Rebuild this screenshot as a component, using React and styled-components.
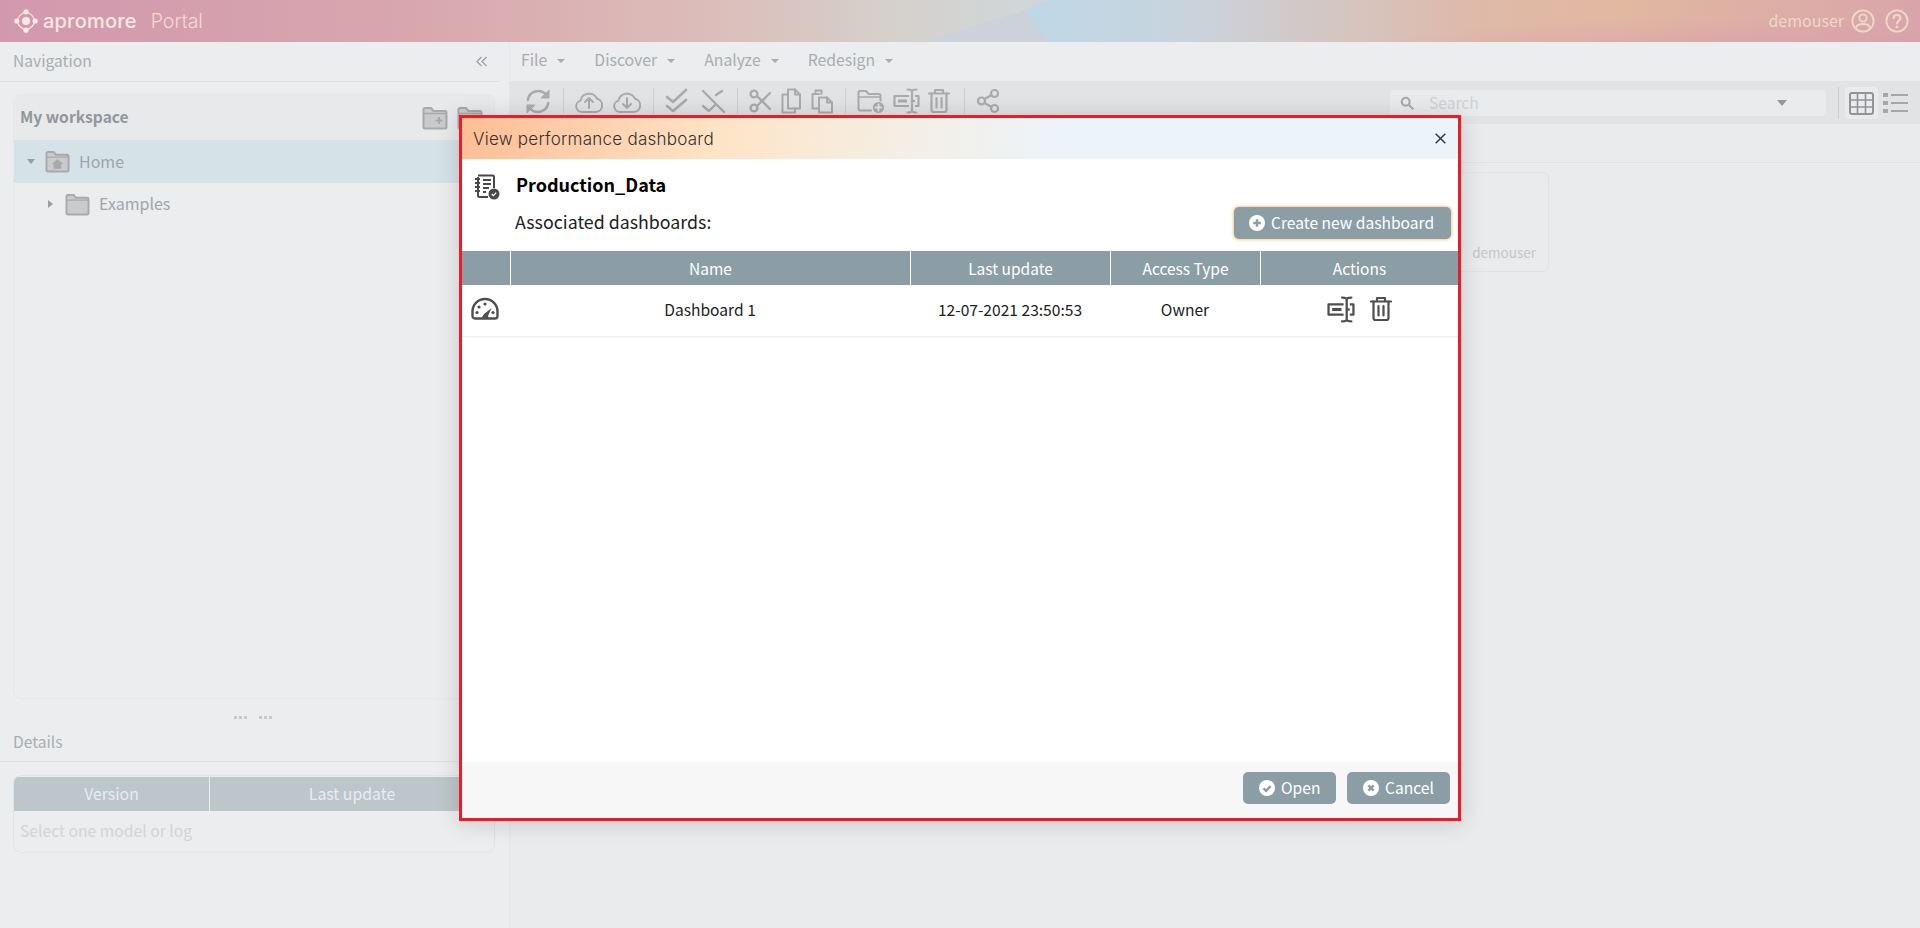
import React from 'react';
import styled, { createGlobalStyle } from 'styled-components';

const sans = `"Noto Sans CJK SC", "Source Sans Pro", "Noto Sans", sans-serif`;
const geo = `"Inter", "Lato", sans-serif`;

const Global = createGlobalStyle`
  html, body { margin: 0; padding: 0; height: 100%; }
  body { font-family: ${sans}; background: #ebedef; overflow: hidden; }
  * { box-sizing: border-box; }
`;

const Page = styled.div`
  position: relative;
  width: 100%;
  height: 100vh;
  display: flex;
  flex-direction: column;
  overflow: hidden;
`;
const Header = styled.header`
  position: relative;
  height: 42px;
  flex: none;
  display: flex;
  align-items: center;
  justify-content: space-between;
  padding: 0 11px 0 14px;
  color: #f3e2d6;
  background:
    radial-gradient(ellipse 420px 34px at 1780px 50px, rgba(217, 158, 172, .75), transparent),
    linear-gradient(90deg, #d298ae 0, #d8a6ae 400px, #dcbcb8 700px, #d5d1cd 900px, #d1d6d8 1020px, #c6d6e0 1100px, #cdd0d6 1220px, #d2c8c6 1310px, #dfb9a8 1480px, #e1b8a0 1620px, #d9a5ab 1920px);
  &::before {
    content: '';
    position: absolute;
    inset: 0;
    background: #cbd2da;
    clip-path: polygon(923px 42px, 1025px 10px, 1049px 42px);
  }
  &::after {
    content: '';
    position: absolute;
    inset: 0;
    background: linear-gradient(90deg, #bed8e7 1025px, #c4d6e2 1110px, rgba(205, 208, 214, 0) 1230px);
    clip-path: polygon(1049px 0, 1260px 0, 1260px 42px, 1049px 42px, 1025px 10px);
  }
  & > * { position: relative; z-index: 1; }
`;
const Brand = styled.div`
  display: flex;
  align-items: center;
  gap: 5px;
`;
const BrandName = styled.span`
  font-family: ${geo};
  font-weight: 500;
  font-size: 20px;
  letter-spacing: .2px;
  color: #f6e8e4;
`;
const BrandPortal = styled.span`
  font-family: ${geo};
  font-weight: 300;
  font-size: 19.5px;
  margin-left: 9px;
  color: #f0dccb;
`;
const UserBox = styled.div`
  display: flex;
  align-items: center;
  font-size: 16px;
  color: #ecd9c9;
  & > svg:first-of-type { margin: 0 10px 0 7px; }
`;
const UserName = styled.span`
  padding-bottom: 2px;
`;
const Body = styled.div`
  flex: 1;
  display: flex;
  min-height: 0;
`;
const West = styled.aside`
  width: 510px;
  flex: none;
  display: flex;
  flex-direction: column;
  border-right: 1px solid #e4e6e8;
`;
const PanelHead = styled.div`
  height: ${p => p.$h}px;
  flex: none;
  display: flex;
  align-items: center;
  justify-content: space-between;
  padding: 0 13px 0 13px;
  margin-right: 9px;
  border-bottom: 1px solid #dfe1e3;
  color: #a9adb0;
  font-size: 15.6px;
`;
const PanelLabel = styled.span`
  padding-bottom: ${p => p.$lift}px;
`;
const Workspace = styled.section`
  margin: 12px 14px 0 13px;
  height: 605px;
  border: 1px solid #e5e7e9;
  border-radius: 8px;
  display: flex;
  flex-direction: column;
  overflow: hidden;
`;
const WorkspaceHead = styled.div`
  height: 45px;
  flex: none;
  display: flex;
  align-items: center;
  justify-content: space-between;
  padding: 0 0 0 6px;
  background: #e8e9eb;
  font-size: 15.6px;
  font-weight: 700;
  color: #92979b;
`;
const WorkspaceTitle = styled.span`
  padding-bottom: 3px;
`;
const HeadIcons = styled.div`
  display: flex;
  gap: 7px;
  margin-right: 10px;
`;
const TreeRow = styled.div`
  height: ${p => p.$h}px;
  flex: none;
  display: flex;
  align-items: center;
  padding-left: ${p => p.$indent}px;
  gap: 9px;
  background: ${p => (p.$selected ? '#d5e2e8' : 'transparent')};
  font-size: 16px;
  color: #a0a5a9;
`;
const TreeLabel = styled.span`
  padding-bottom: 2px;
`;
const Caret = styled.span`
  width: 0;
  height: 0;
  flex: none;
  margin-right: ${p => p.$gap}px;
  border-style: solid;
  ${p => p.$open
    ? 'border-width: 5px 4px 0 4px; border-color: #9a9ea2 transparent transparent transparent;'
    : 'border-width: 4px 0 4px 5px; border-color: transparent transparent transparent #9a9ea2;'}
`;
const Splitter = styled.div`
  height: 28px;
  flex: none;
  display: flex;
  align-items: center;
  justify-content: center;
  gap: 12px;
  padding: 8px 4px 0 0;
`;
const Dots = styled.span`
  width: 13px;
  height: 3px;
  background: radial-gradient(circle at 1.5px 1.5px, #c6c9cb 1.4px, transparent 1.6px) 0 0 / 5px 3px;
`;
const DetailsTable = styled.div`
  margin: 13px 14px 0 13px;
  height: 78px;
  border: 1px solid #e0e2e4;
  border-radius: 8px;
  overflow: hidden;
`;
const DetailsHead = styled.div`
  height: 34px;
  margin-top: 1px;
  display: grid;
  grid-template-columns: 195px 1fr;
  background: #bdc6cb;
  color: #e9edef;
  font-size: 15.8px;
`;
const DetailsCell = styled.div`
  display: flex;
  align-items: center;
  justify-content: center;
  padding-bottom: 1px;
  & + & { border-left: 1px solid #eceef0; }
`;
const DetailsEmpty = styled.div`
  padding: 8px 6px;
  font-size: 15.7px;
  color: #d2d5d7;
`;
const Center = styled.main`
  flex: 1;
  min-width: 0;
  display: flex;
  flex-direction: column;
  background: #e9ebed;
`;
const MenuBar = styled.nav`
  height: 40px;
  flex: none;
  display: flex;
  align-items: center;
  padding: 0 0 4px 11px;
  gap: 29px;
  background: #ebedef;
  border-bottom: 1px solid #e0e2e4;
`;
const MenuItem = styled.span`
  display: flex;
  align-items: center;
  gap: 10px;
  font-size: 15.8px;
  color: #a9adb0;
  &::after {
    content: '';
    margin-top: 3px;
    border-style: solid;
    border-width: 4px 4px 0 4px;
    border-color: #a9adb0 transparent transparent transparent;
  }
`;
const Toolbar = styled.div`
  height: 42px;
  flex: none;
  display: flex;
  align-items: center;
  padding-left: 16px;
  background: #e1e3e5;
`;
const ToolStrip = styled.div`
  display: flex;
  align-items: center;
  padding-bottom: 4px;
`;
const ToolGroup = styled.div`
  display: flex;
  align-items: center;
  gap: ${p => p.$gap || 10}px;
  padding-right: ${p => p.$pr || 12}px;
  margin-right: ${p => p.$mr || 11}px;
  height: 26px;
  border-right: 1px solid #cdd0d2;
  &:last-child { border-right: 0; }
`;
const Search = styled.div`
  margin-left: auto;
  width: 436px;
  height: 26px;
  display: flex;
  align-items: center;
  padding: 0 0 0 10px;
  background: #e9ebed;
  border-radius: 4px;
  font-size: 15.6px;
  color: #cfd2d4;
`;
const SearchLabel = styled.span`
  margin-left: 15px;
  flex: 1;
  padding-bottom: 3px;
`;
const SearchCaret = styled.span`
  margin-right: 39px;
  border-style: solid;
  border-width: 6px 5.500px 0 5.500px;
  border-color: #95999c transparent transparent transparent;
`;
const ViewSwitch = styled.div`
  display: flex;
  align-items: center;
  gap: 1px;
  margin: 0 8px 0 12px;
  padding-left: 6px;
  border-left: 1px solid #cdd0d2;
`;
const ViewButton = styled.span`
  width: 33px;
  height: 32px;
  display: flex;
  align-items: center;
  justify-content: center;
  border-radius: 3px;
  background: ${p => (p.$active ? '#e9ebed' : 'transparent')};
`;
const Crumbs = styled.div`
  height: 39px;
  flex: none;
  border-bottom: 1px solid #e0e2e4;
`;
const CardArea = styled.div`
  flex: 1;
  display: flex;
  justify-content: flex-end;
  align-items: flex-start;
  padding: 9px 371px 0 0;
`;
const Card = styled.div`
  width: 200px;
  height: 100px;
  border: 1px solid #e0e2e4;
  border-radius: 6px;
  display: flex;
  align-items: flex-end;
  justify-content: flex-end;
  padding: 0 12px 9px 0;
  font-size: 13.500px;
  color: #c4c7c9;
`;

const Modal = styled.div`
  position: absolute;
  left: 459px;
  top: 115px;
  width: 1002px;
  height: 706px;
  display: flex;
  flex-direction: column;
  background: #fff;
  border: 3px solid #ed1c24;
  box-shadow: 0 2px 22px rgba(0, 0, 0, .16);
`;
const ModalTitle = styled.div`
  height: 41px;
  flex: none;
  display: flex;
  align-items: center;
  justify-content: space-between;
  padding: 0 12px 0 11px;
  background: linear-gradient(100deg, #ffbd94 0%, #fee4c6 26%, #f4efe6 45%, #ebf4fb 62%, #ebf4fb 100%);
  font-family: ${geo};
  font-weight: 300;
  font-size: 17px;
  letter-spacing: .25px;
  color: #333;
`;
const Close = styled.span`
  display: flex;
  color: #2f3b45;
`;
const Intro = styled.div`
  height: 92px;
  flex: none;
  display: grid;
  grid-template-columns: 41px 1fr auto;
  grid-template-rows: 48px 40px;
  padding: 0 7px 0 12px;
`;
const FileIcon = styled.div`
  padding-top: 15px;
`;
const FileName = styled.div`
  grid-column: 2 / 4;
  display: flex;
  align-items: center;
  padding: 2px 0 0 1px;
  font-size: 18px;
  font-weight: 700;
  color: #000;
`;
const AssocLabel = styled.div`
  display: flex;
  align-items: center;
  font-size: 17.800px;
  color: #222;
  padding-bottom: 13px;
`;
const ActionButton = styled.button`
  height: 32px;
  display: inline-flex;
  align-items: center;
  gap: 6px;
  padding: 0 0 2px ${p => p.$pl}px;
  width: ${p => p.$w}px;
  border: 0;
  border-radius: 5px;
  background: #8b9ea6;
  color: #fff;
  font-family: ${sans};
  font-size: 15.600px;
  box-shadow: ${p => (p.$focus ? '0 0 3px 1px #f9c98a' : 'none')};
  & > svg { margin-top: 2px; }
`;
const Grid = styled.div`
  display: grid;
  grid-template-columns: 48px 400px 200px 150px 198px;
`;
const HeadRow = styled(Grid)`
  height: 34px;
  background: #8b9ea6;
  color: #fff;
  font-size: 15.500px;
`;
const HeadCell = styled.div`
  display: flex;
  align-items: center;
  justify-content: center;
  & + & { border-left: 1px solid #fff; }
`;
const DataRow = styled(Grid)`
  height: 52px;
  border-bottom: 1px solid #eeeeee;
  font-size: 15.600px;
  color: #222;
`;
const DataCell = styled.div`
  display: flex;
  align-items: center;
  justify-content: center;
  gap: ${p => p.$gap || 0}px;
  padding-bottom: 3px;
  padding-right: ${p => p.$pr || 0}px;
`;
const Filler = styled.div`
  flex: 1;
`;
const ModalFoot = styled.div`
  height: 56px;
  flex: none;
  display: flex;
  justify-content: flex-end;
  align-items: flex-start;
  gap: 11px;
  padding: 10px 8px 0 0;
  background: #f7f7f7;
`;

const S = ({ w = 26, h = 26, vb = '0 0 26 26', c = '#a9abad', sw = 2, children }) => (
  <svg width={w} height={h} viewBox={vb} fill="none" stroke={c} strokeWidth={sw} strokeLinecap="round" strokeLinejoin="round" style={{ flex: 'none', display: 'block' }}>
    {children}
  </svg>
);

const Logo = () => (
  <svg width="24" height="24" viewBox="0 0 24 24" fill="#f6e8e4" style={{ flex: 'none' }}>
    <circle cx="12" cy="12" r="4" />
    <circle cx="12" cy="2.800" r="2.600" /><circle cx="12" cy="21.200" r="2.600" />
    <circle cx="2.800" cy="12" r="2.600" /><circle cx="21.200" cy="12" r="2.600" />
    <path d="M12 3Q19 5 21 12Q19 19 12 21Q5 19 3 12Q5 5 12 3Z" fill="none" stroke="#f6e8e4" strokeWidth="1.100" />
  </svg>
);
const UserIcon = () => (
  <S w={24} h={24} vb="0 0 24 24" c="#ecd9c9" sw={1.800}>
    <circle cx="12" cy="12" r="10.600" /><circle cx="12" cy="9" r="3.600" />
    <path d="M5 18.500c1-2.600 3.400-3.500 7-3.500s6 .9 7 3.500" />
  </S>
);
const HelpIcon = () => (
  <S w={24} h={24} vb="0 0 24 24" c="#ecd9c9" sw={1.800}>
    <circle cx="12" cy="12" r="10.600" />
    <path d="M8.600 9.200c0-2 1.500-3.200 3.400-3.200s3.400 1.200 3.400 3c0 2.600-3.400 2.600-3.400 5.400" strokeWidth="2.200" />
    <circle cx="12" cy="18" r=".7" strokeWidth="1.600" />
  </S>
);
const Folder = ({ children, w = 25, h = 23, fill = '#c9cbcd', c = '#a7a9ab' }) => (
  <svg width={w} height={h} viewBox="0 0 26 24" style={{ flex: 'none', display: 'block' }}>
    <path d="M1.500 3.500a1.500 1.500 0 0 1 1.500-1.500h6l2.500 3H23a1.500 1.500 0 0 1 1.500 1.500V21a1.500 1.500 0 0 1-1.500 1.500H3A1.500 1.500 0 0 1 1.500 21Z" fill={fill} stroke={c} strokeWidth="2" strokeLinejoin="round" />
    <path d="M2 7.500h22" stroke={c} strokeWidth="1.400" />
    {children}
  </svg>
);
const Refresh = () => (
  <S w={24} h={25} vb="0 0 24 25" sw={2.500}>
    <path d="M1.800 11A10.500 10.500 0 0 1 20 5.500" />
    <path d="M22.200 14A10.500 10.500 0 0 1 4 19.500" />
    <path d="M23 1.500v7.500h-7.500Z" fill="#a9abad" strokeWidth="1" />
    <path d="M1 23.500V16h7.500Z" fill="#a9abad" strokeWidth="1" />
  </S>
);
const Cloud = ({ down }) => (
  <S w={28} h={26} vb="0 0 28 26">
    <path d="M7 24a5.800 5.800 0 0 1-1.500-11.400A8.800 8.800 0 0 1 22 10.800 6.700 6.700 0 0 1 21 24Z" />
    {down ? <path d="M14 10v10M10 16l4 4 4-4" /> : <path d="M14 20V10M10 14l4-4 4 4" />}
  </S>
);
const CheckAll = () => (
  <S w={23} h={26} vb="0 0 23 26" sw={2.600}><path d="M2 9l6 5L21 2" /><path d="M2 18l6 5 13-11" /></S>
);
const UncheckAll = () => (
  <S w={24} h={26} vb="0 0 24 26" sw={2.400}><path d="M2 3l21 21" /><path d="M15 7l6-4" /><path d="M2 18l6 5 6-6" /></S>
);
const Scissors = () => (
  <S w={22} h={26} vb="0 0 22 26" sw={2.400}><circle cx="5" cy="6" r="3.400" /><circle cx="5" cy="20" r="3.400" /><path d="M8 8l13 13M8 18L21 5" /></S>
);
const CopyIcon = () => (
  <S w={20} h={26} vb="0 0 20 26"><path d="M7 1.500h7l5 5v14H7Z" /><path d="M14 1.500v5h5" /><path d="M7 6.500H1.500V24.500H14v-4" /></S>
);
const Paste = () => (
  <S w={22} h={26} vb="0 0 22 26"><path d="M8 6H1.500v14.500H8" /><path d="M4.500 6V2.500h6V6" /><path d="M8 9.500h8l5 5v10H8Z" /><path d="M16 9.500v5h5" /></S>
);
const FolderAdd = ({ c = '#a9abad', fill = 'none' }) => (
  <S w={28} h={26} vb="0 0 28 26" c={c}>
    <path d="M14 22.500H3A1.500 1.500 0 0 1 1.500 21V4.500A1.500 1.500 0 0 1 3 3h6l2.500 3H22A1.500 1.500 0 0 1 23.500 7.500v5" fill={fill} />
    <path d="M2 9h21" strokeWidth="1.500" />
    <circle cx="21.500" cy="19.500" r="5.500" fill={c} stroke="none" />
    <path d="M21.500 16.500v6M18.500 19.500h6" stroke="#e1e3e5" strokeWidth="1.800" />
  </S>
);
const Rename = ({ c = '#a9abad', w = 27, h = 26 }) => (
  <S w={w} h={h} vb="0 0 27 26" c={c} sw={2.200}>
    <path d="M16 8H1.500v10H16M22 8h3.500v10H22" strokeLinecap="butt" />
    <rect x="5" y="11.500" width="9" height="3" fill={c} stroke="none" />
    <path d="M19 3.500v19M14.500 1.500c2.500 0 4.500 .5 4.500 2 0-1.500 2-2 4.500-2M14.500 24.500c2.500 0 4.500-.5 4.500-2 0 1.500 2 2 4.500 2" />
    <path d="M19 13h3" strokeLinecap="butt" />
  </S>
);
const Trash = ({ c = '#a9abad', w = 22, h = 26 }) => (
  <S w={w} h={h} vb="0 0 22 26" c={c} sw={2.200}>
    <path d="M1 5.500h20M7 5V2h8v3" />
    <path d="M3.500 5.500V22a2 2 0 0 0 2 2h11a2 2 0 0 0 2-2V5.500" />
    <path d="M8.500 10v9.500M13.500 10v9.500" />
  </S>
);
const Share = () => (
  <S w={22} h={26} vb="0 0 22 26" sw={2.200}><circle cx="17.500" cy="5.500" r="3.500" /><circle cx="4.500" cy="13" r="3.500" /><circle cx="17.500" cy="20.500" r="3.500" /><path d="M7.500 11l7-4M7.500 15l7 4" /></S>
);
const SearchIcon = () => (
  <S w={14} h={14} vb="0 0 16 16" c="#a8abae" sw={2.400}><circle cx="6.500" cy="6.500" r="4.500" /><path d="M10 10l4.500 4.500" /></S>
);
const GridIcon = () => (
  <S w={25} h={23} vb="0 0 25 23" c="#919497" sw={2}>
    <rect x="1" y="1" width="23" height="21" rx="2" /><path d="M1 8h23M1 15h23M8.500 1v21M16.500 1v21" strokeWidth="1.600" />
  </S>
);
const ListIcon = () => (
  <svg width="25" height="22" viewBox="0 0 25 22" fill="#a5a8ab" style={{ display: 'block' }}>
    <rect x="0" y="1" width="5" height="4" /><rect x="0" y="9" width="5" height="4" /><rect x="0" y="17" width="5" height="4" />
    <rect x="8" y="2" width="17" height="2" /><rect x="8" y="10" width="17" height="2" /><rect x="8" y="18" width="17" height="2" />
  </svg>
);
const LogIcon = () => (
  <svg width="26" height="26" viewBox="0 0 26 26" fill="none" stroke="#4a4a4a" strokeWidth="2" style={{ display: 'block' }}>
    <path d="M4 1.500h14.500a1.500 1.500 0 0 1 1.500 1.500v11M14 23H5.500A1.500 1.500 0 0 1 4 21.500V3" />
    <path d="M1 5h5M1 9h5M1 13h5M1 17h5M9 6h8M9 10h8M9 14h6M9 18h3" strokeWidth="1.800" />
    <circle cx="20" cy="20" r="5.500" fill="#4a4a4a" stroke="none" />
    <path d="M17.800 20l1.600 1.600 2.800-3" stroke="#fff" strokeWidth="1.200" />
  </svg>
);
const Gauge = () => (
  <svg width="28" height="24" viewBox="0 0 28 24" fill="none" stroke="#4f4f4f" strokeWidth="2.400" style={{ display: 'block' }}>
    <path d="M4 21.500A2.500 2.500 0 0 1 1.500 19v-4.500a12.500 12.500 0 0 1 25 0V19a2.500 2.500 0 0 1-2.500 2.500Z" />
    <path d="M10.500 21l2.500-4 7.500-6-3.500 8 .5 2Z" fill="#4f4f4f" stroke="none" />
    <g fill="#4f4f4f" stroke="none">
      <circle cx="6" cy="15.500" r="1.600" /><circle cx="8" cy="10" r="1.600" /><circle cx="14" cy="7" r="1.600" /><circle cx="22" cy="15.500" r="1.600" />
    </g>
  </svg>
);
const BadgeIcon = ({ kind }) => (
  <svg width="16" height="16" viewBox="0 0 17 17" style={{ flex: 'none', display: 'block' }}>
    <circle cx="8.500" cy="8.500" r="8.500" fill="#fff" />
    {kind === 'plus' && <path d="M8.500 4.500v8M4.500 8.500h8" stroke="#8b9ea6" strokeWidth="2.600" />}
    {kind === 'check' && <path d="M4.800 8.800l2.700 2.700 4.800-5" fill="none" stroke="#8b9ea6" strokeWidth="2.600" />}
    {kind === 'x' && <path d="M5.700 5.700l5.600 5.600M11.300 5.700l-5.600 5.600" stroke="#8b9ea6" strokeWidth="2.600" />}
  </svg>
);
const CloseIcon = () => (
  <svg width="11" height="11" viewBox="0 0 11 11" stroke="currentColor" strokeWidth="1.500"><path d="M.7.7l9.600 9.600M10.300.7L.7 10.300" /></svg>
);
const Chevrons = () => (
  <svg width="11" height="11" viewBox="0 0 11 11" fill="none" stroke="#9ea2a5" strokeWidth="1.300"><path d="M5.500 1L1 5.500 5.500 10M10.500 1L6 5.500l4.500 4.500" /></svg>
);

export default function App() {
  return (
    <Page>
      <Global />
      <Header>
        <Brand>
          <Logo />
          <BrandName>apromore</BrandName>
          <BrandPortal>Portal</BrandPortal>
        </Brand>
        <UserBox><UserName>demouser</UserName><UserIcon /><HelpIcon /></UserBox>
      </Header>
      <Body>
        <West>
          <PanelHead $h={40}><PanelLabel $lift={4}>Navigation</PanelLabel> <Chevrons /></PanelHead>
          <Workspace>
            <WorkspaceHead>
              <WorkspaceTitle>My workspace</WorkspaceTitle>
              <HeadIcons>
                <Folder w={28} h={24}><path d="M17 11v7M13.500 14.500h7" stroke="#a7a9ab" strokeWidth="2" /></Folder>
                <Folder w={28} h={24} />
              </HeadIcons>
            </WorkspaceHead>
            <TreeRow $h={43} $selected $indent={13}>
              <Caret $open $gap={1} />
              <Folder><path d="M13 9.500l6 5h-2v5h-8v-5H7Z" fill="#a7a9ab" /></Folder>
              <TreeLabel>Home</TreeLabel>
            </TreeRow>
            <TreeRow $h={42} $indent={34}>
              <Caret $gap={3} />
              <Folder />
              <TreeLabel>Examples</TreeLabel>
            </TreeRow>
          </Workspace>
          <Splitter><Dots /><Dots /></Splitter>
          <PanelHead $h={35}><PanelLabel $lift={6}>Details</PanelLabel></PanelHead>
          <DetailsTable>
            <DetailsHead>
              <DetailsCell>Version</DetailsCell>
              <DetailsCell>Last update</DetailsCell>
            </DetailsHead>
            <DetailsEmpty>Select one model or log</DetailsEmpty>
          </DetailsTable>
        </West>
        <Center>
          <MenuBar>
            <MenuItem>File</MenuItem>
            <MenuItem>Discover</MenuItem>
            <MenuItem>Analyze</MenuItem>
            <MenuItem>Redesign</MenuItem>
          </MenuBar>
          <Toolbar>
            <ToolStrip>
              <ToolGroup $pr={13}><Refresh /></ToolGroup>
              <ToolGroup $gap={10}><Cloud /><Cloud down /></ToolGroup>
              <ToolGroup $gap={13} $pr={12}><CheckAll /><UncheckAll /></ToolGroup>
              <ToolGroup $gap={10}><Scissors /><CopyIcon /><Paste /></ToolGroup>
              <ToolGroup $gap={8} $pr={14} $mr={12}><FolderAdd /><Rename /><Trash /></ToolGroup>
              <ToolGroup><Share /></ToolGroup>
            </ToolStrip>
            <Search>
              <SearchIcon />
              <SearchLabel>Search</SearchLabel>
              <SearchCaret />
            </Search>
            <ViewSwitch>
              <ViewButton $active><GridIcon /></ViewButton>
              <ViewButton><ListIcon /></ViewButton>
            </ViewSwitch>
          </Toolbar>
          <Crumbs />
          <CardArea><Card>demouser</Card></CardArea>
        </Center>
      </Body>
      <Modal>
        <ModalTitle>
          View performance dashboard
          <Close><CloseIcon /></Close>
        </ModalTitle>
        <Intro>
          <FileIcon><LogIcon /></FileIcon>
          <FileName>Production_Data</FileName>
          <div />
          <AssocLabel>Associated dashboards:</AssocLabel>
          <ActionButton $w={217} $pl={15} $focus><BadgeIcon kind="plus" />Create new dashboard</ActionButton>
        </Intro>
        <HeadRow>
          <HeadCell />
          <HeadCell>Name</HeadCell>
          <HeadCell>Last update</HeadCell>
          <HeadCell>Access Type</HeadCell>
          <HeadCell>Actions</HeadCell>
        </HeadRow>
        <DataRow>
          <DataCell $pr={2}><Gauge /></DataCell>
          <DataCell>Dashboard 1</DataCell>
          <DataCell>12-07-2021 23:50:53</DataCell>
          <DataCell>Owner</DataCell>
          <DataCell $gap={15}><Rename c="#4f4f4f" w={28} h={27} /><Trash c="#4f4f4f" w={22} h={26} /></DataCell>
        </DataRow>
        <Filler />
        <ModalFoot>
          <ActionButton $w={93} $pl={16}><BadgeIcon kind="check" />Open</ActionButton>
          <ActionButton $w={103} $pl={16}><BadgeIcon kind="x" />Cancel</ActionButton>
        </ModalFoot>
      </Modal>
    </Page>
  );
}
